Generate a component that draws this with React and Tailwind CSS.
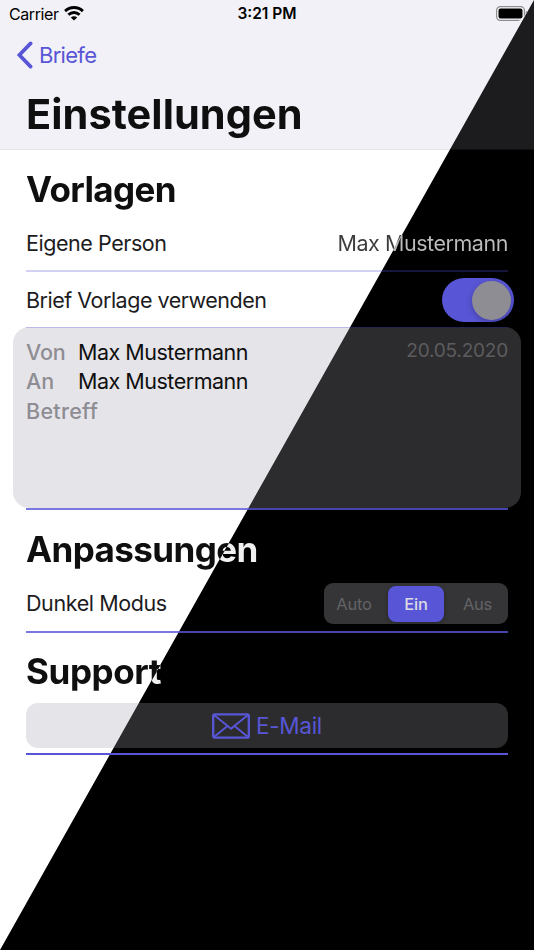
const DIAGONAL = 'bg-fixed bg-no-repeat';
const surface = {
  page: `${DIAGONAL} bg-[linear-gradient(to_bottom_right,#ffffff_49.95%,#000000_50.05%)]`,
  header: `${DIAGONAL} bg-[linear-gradient(to_bottom_right,#f2f1f7_49.95%,#1c1c1e_50.05%)]`,
  headerLine: `${DIAGONAL} bg-[linear-gradient(to_bottom_right,#e3e2e6_49.95%,#0e0e0f_50.05%)]`,
  card: `${DIAGONAL} bg-[linear-gradient(to_bottom_right,#e5e4e9_49.95%,#2c2c2e_50.05%)]`,
  faintLine: `${DIAGONAL} bg-[linear-gradient(to_bottom_right,#d3d2f4_49.95%,#16153a_50.05%)]`,
  cardLine: `${DIAGONAL} bg-[linear-gradient(to_bottom_right,#bcbae8_49.95%,#25244f_50.05%)]`,
};
const ink = {
  strong: `${DIAGONAL} bg-clip-text text-transparent bg-[linear-gradient(to_bottom_right,#0f0f0f_49.95%,#f0f0f0_50.05%)]`,
  value: `${DIAGONAL} bg-clip-text text-transparent bg-[linear-gradient(to_bottom_right,#3c3c3e_49.95%,#bcbcbe_50.05%)]`,
};

function Title({ children, className = 'tracking-[-0.6px]' }) {
  return (
    <h2 className="flex h-11 items-center text-[35px] font-bold leading-none">
      <span className={`${ink.strong} py-1 ${className}`}>{children}</span>
    </h2>
  );
}

function Wifi() {
  return (
    <svg width="20" height="15" viewBox="0 0 20 15" fill="none" stroke="black" strokeWidth="2.9">
      <path d="M1.1 5.1C6.1.3 13.9.3 18.9 5.1" />
      <path d="M4.4 8.8c3.2-3 8-3 11.2 0" />
      <path d="M6.8 11.4c1.8-1.6 4.6-1.6 6.4 0L10 14.6z" fill="black" stroke="none" />
    </svg>
  );
}

function Battery() {
  return (
    <svg width="33" height="15" viewBox="0 0 33 15">
      <rect x="0.6" y="0.6" width="27.8" height="13.8" rx="3.8" fill="#fbfbfc" stroke="#8d8d91" strokeWidth="1.2" />
      <rect x="2.5" y="2.5" width="24" height="10" rx="2" fill="black" />
      <path d="M29.8 5v5c1.5-.5 2-1.3 2-2.5s-.5-2-2-2.5z" fill="#8d8d91" />
    </svg>
  );
}

function Header() {
  return (
    <header className={`flex h-[150px] flex-col ${surface.header}`}>
      <div className="grid h-[27px] grid-cols-3 items-center text-[16px] text-black">
        <div className="flex items-center gap-[5px] pl-[9px]">
          <span className="tracking-[-0.4px]">Carrier</span>
          <Wifi />
        </div>
        <span className="pt-px text-center text-[15.5px] font-semibold">3:21 PM</span>
        <div className="flex justify-end pr-[5px] [clip-path:polygon(0_0,100%_0,calc(100%_-_15px)_100%,0_100%)]">
          <Battery />
        </div>
      </div>
      <div className="flex h-[55px] items-center gap-[5px] pl-4 text-[22px] text-[#5856d6]">
        <svg width="18" height="28" viewBox="0 0 18 28" fill="none" stroke="currentColor" strokeWidth="3.7" strokeLinecap="round" strokeLinejoin="miter">
          <path d="M14.6 2.4 3.4 14l11.2 11.6" />
        </svg>
        <span className="pt-px tracking-[-0.7px]">Briefe</span>
      </div>
      <h1 className="flex h-[67px] items-center pb-px pl-[26px] text-[41.5px] font-bold leading-none">
        <span className={`${ink.strong} py-1 tracking-[0.05px]`}>Einstellungen</span>
      </h1>
      <div className={`h-px ${surface.headerLine}`} />
    </header>
  );
}

export default function App() {
  return (
    <main className={`h-[950px] w-[534px] overflow-hidden font-['Inter','Liberation_Sans',sans-serif] ${surface.page}`}>
      <Header />
      <section className="px-[26px] pt-[17px]">
        <Title>Vorlagen</Title>
        <div className="flex h-[59px] items-center justify-between pt-[6px] text-[21.5px] tracking-[-0.45px]">
          <span className="text-[#1c1c1e]">Eigene Person</span>
          <span className={ink.value}>Max Mustermann</span>
        </div>
        <div className={`h-[1.5px] ${surface.faintLine}`} />
        <div className="-mr-[6px] flex h-[55.5px] items-center justify-between pt-[2px] text-[21.5px] tracking-[-0.49px] text-[#1c1c1e]">
          <span>Brief Vorlage verwenden</span>
          <div className="flex h-[44px] w-[72px] items-center justify-end rounded-full bg-[#5856d6] pr-[3px]">
            <span className="size-[39px] rounded-full bg-[#8e8d93] shadow-[0_2px_6px_rgba(0,0,0,0.25)]" />
          </div>
        </div>
        <div className={`-mx-[13px] flex h-[181px] flex-col rounded-[16px] px-[13px] text-[21.5px] ${surface.card}`}>
          <div className={`h-px shrink-0 ${surface.cardLine}`} />
          <div className="flex justify-between pt-[9px]">
            <dl className="grid auto-rows-[29.5px] grid-cols-[52px_auto] content-start items-center pt-[0.5px] leading-none">
              <dt className="font-medium tracking-[-0.2px] text-[#8e8d93]">Von</dt>
              <dd className="tracking-[-0.49px] text-[#0f0f0f]">Max Mustermann</dd>
              <dt className="font-medium text-[#8e8d93]">An</dt>
              <dd className="tracking-[-0.49px] text-[#0f0f0f]">Max Mustermann</dd>
              <dt className="font-medium tracking-[0.3px] text-[#8e8d93]">Betreff</dt>
            </dl>
            <span className="h-[27px] text-[19px] leading-[27px] tracking-[-0.2px] text-[#5c5c5f]">20.05.2020</span>
          </div>
        </div>
        <div className="h-[2px] bg-[#5856d6]/80" />
      </section>

      <section className="px-[26px] pt-[17px]">
        <Title>Anpassungen</Title>
        <div className="flex h-[60px] items-center justify-between pt-[5px] text-[21.5px]">
          <span className="tracking-[-0.4px] text-[#1c1c1e]">Dunkel Modus</span>
          <div className="grid h-[41px] w-[184px] grid-cols-[60px_60px_64px] items-center rounded-[9px] bg-[#353537] text-center text-[16.5px] tracking-[-0.2px] text-[#636366]">
            <span className="pt-px">Auto</span>
            <span className="ml-1 h-9 rounded-[8px] bg-[#5856d6] font-medium leading-9 text-[#dcdce2] shadow-[0_1px_4px_rgba(0,0,0,0.3)]">Ein</span>
            <span className="pl-[3px] pt-px">Aus</span>
          </div>
        </div>
        <div className="h-[2px] bg-[#5856d6]/80" />
      </section>

      <section className="px-[26px] pt-4">
        <Title className="tracking-[-0.4px]">Support</Title>
        <div className={`mt-[10px] flex h-[45px] items-center justify-center gap-[6px] rounded-[12px] pt-px text-[22.5px] text-[#5856d6] ${surface.card}`}>
          <svg width="38" height="26" viewBox="0 0 38 26" fill="none" stroke="currentColor" strokeWidth="2.3" strokeLinejoin="round">
            <rect x="1.2" y="1.3" width="35.6" height="23.4" rx="1.5" />
            <path d="M2 2 16 13.2l3 2.6 3-2.6L36 2M2 24l13.5-11M36 24 22.5 13" strokeWidth="1.9" />
          </svg>
          <span className="tracking-[-0.3px]">E-Mail</span>
        </div>
        <div className="mt-[5px] h-[1.5px] bg-[#5856d6]" />
      </section>
    </main>
  );
}
